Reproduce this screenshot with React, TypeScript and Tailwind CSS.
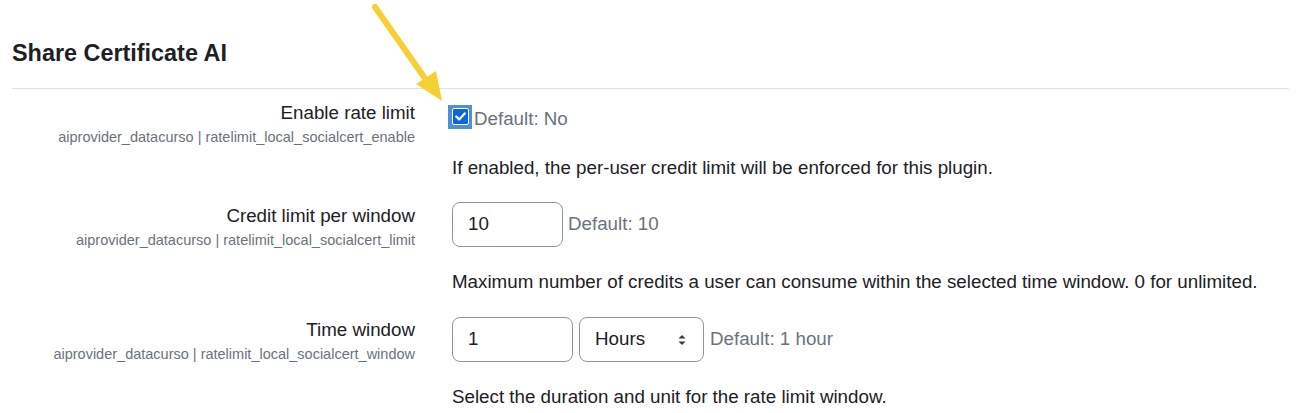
import React from 'react';

const font = { fontFamily: '"Liberation Sans", Arial, sans-serif' };

function Label({ title, name }: { title: string; name: string }) {
  return (
    <div className="w-[415px] shrink-0 text-right">
      <div className="text-[18.75px] leading-[28px] text-[#1d2125]">{title}</div>
      <div className="text-[14.5px] leading-[21px] text-[#6a737b]">{name}</div>
    </div>
  );
}

function SelectArrows() {
  return (
    <svg width="10" height="14" viewBox="0 0 10 14" className="text-[#343a40]">
      <path d="M1.5 5.5 L5 2 L8.5 5.5 Z" fill="currentColor" />
      <path d="M1.5 8.5 L5 12 L8.5 8.5 Z" fill="currentColor" />
    </svg>
  );
}

export default function App() {
  return (
    <div className="relative min-h-screen bg-white" style={font}>
      {/* Heading */}
      <div className="px-3 pt-[39px]">
        <h3 className="text-[23.4px] font-bold leading-[28px] text-[#1d2125]">Share Certificate AI</h3>
        <div className="mt-[21px] border-t border-[#dee2e6]" />
      </div>

      {/* Settings */}
      <div className="flex flex-col gap-[20px] pt-[10px]">
        {/* Enable rate limit */}
        <div className="flex">
          <Label title="Enable rate limit" name="aiprovider_datacurso | ratelimit_local_socialcert_enable" />
          <div className="pl-[37px]">
            <div className="flex h-9 items-center">
              <div className="-ml-[4px] -mt-[1px] flex h-6 w-6 items-center justify-center bg-[#4f8fd6]">
                <div className="flex h-[17px] w-[17px] items-center justify-center rounded-[2px] border border-white bg-[#0b63e5]">
                  <svg width="11" height="9" viewBox="0 0 11 9">
                    <path d="M1.3 4.6 L4.2 7.4 L9.7 1.4" fill="none" stroke="white" strokeWidth="2.2" strokeLinecap="round" strokeLinejoin="round" />
                  </svg>
                </div>
              </div>
              <span className="ml-[2px] mt-[4px] text-[18.75px] text-[#6a737b]">Default: No</span>
            </div>
            <p className="mt-[19px] text-[18.75px] leading-[28px] text-[#1d2125]">
              If enabled, the per-user credit limit will be enforced for this plugin.
            </p>
          </div>
        </div>

        {/* Credit limit per window */}
        <div className="flex">
          <Label title="Credit limit per window" name="aiprovider_datacurso | ratelimit_local_socialcert_limit" />
          <div className="pl-[37px]">
            <div className="flex items-center">
              <div className="flex h-[45px] w-[111px] items-center rounded-lg border border-[#8f959e] pl-[15px] text-[18.75px] text-[#1d2125]">
                10
              </div>
              <span className="ml-[5px] text-[18.75px] text-[#6a737b]">Default: 10</span>
            </div>
            <p className="mt-[21px] text-[18.75px] leading-[28px] text-[#1d2125]">
              Maximum number of credits a user can consume within the selected time window. 0 for unlimited.
            </p>
          </div>
        </div>

        {/* Time window */}
        <div className="flex">
          <Label title="Time window" name="aiprovider_datacurso | ratelimit_local_socialcert_window" />
          <div className="pl-[37px]">
            <div className="flex items-center">
              <div className="flex h-[45px] w-[121px] items-center rounded-lg border border-[#8f959e] pl-[15px] text-[18.75px] text-[#1d2125]">
                1
              </div>
              <div className="ml-[6px] mt-[1px] flex h-[45px] w-[125px] items-center justify-between rounded-lg border border-[#8f959e] pl-[15px] pr-[16px] text-[18.75px] text-[#1d2125]">
                <span>Hours</span>
                <SelectArrows />
              </div>
              <span className="ml-[6px] text-[18.75px] text-[#6a737b]">Default: 1 hour</span>
            </div>
            <p className="mt-[21px] text-[18.75px] leading-[28px] text-[#1d2125]">
              Select the duration and unit for the rate limit window.
            </p>
          </div>
        </div>
      </div>

      {/* Annotation arrow */}
      <svg className="pointer-events-none absolute left-0 top-0" width="460" height="110" viewBox="0 0 460 110">
        <line x1="375" y1="7" x2="424" y2="77" stroke="#f5d033" strokeWidth="6" strokeLinecap="round" />
        <polygon points="416,84 436,71 442,101" fill="#f5d033" />
      </svg>
    </div>
  );
}
